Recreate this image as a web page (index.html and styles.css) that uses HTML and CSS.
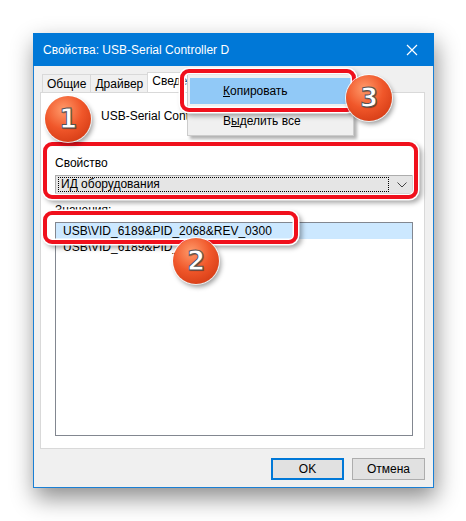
FILE: index.html
```html
<!DOCTYPE html>
<html>

<head lang="ru">
    <meta charset="UTF-8">
    <title>Свойства: USB-Serial Controller D</title>
    <link rel="stylesheet" href="styles.css">
</head>

<body>

    <div class="window">
        <div class="titlebar">
            <span class="title">Свойства: USB-Serial Controller D</span>
            <svg class="close" width="12" height="12" viewBox="0 0 12 12">
                <path d="M1 1 L11 11 M11 1 L1 11" stroke="#fff" stroke-width="1.2" fill="none" />
            </svg>
        </div>

        <div class="content">
            <div class="tabs">
                <span class="tab">Общие</span>
                <span class="tab">Драйвер</span>
                <span class="tab active">Сведения</span>
                <span class="tab">События</span>
            </div>

            <div class="panel">
                <div class="device">
                    <svg class="device-icon" width="32" height="32" viewBox="0 0 32 32">
                        <rect x="4" y="8" width="24" height="16" fill="#9aa4ad" />
                    </svg>
                    <span>USB-Serial Controller D</span>
                </div>

                <div class="label">Свойство</div>
                <div class="combo">
                    <span class="combo-value">ИД оборудования</span>
                    <svg class="combo-arrow" width="10" height="6" viewBox="0 0 10 6">
                        <path d="M0.5 0.5 L5 5 L9.5 0.5" stroke="#444" stroke-width="1" fill="none" />
                    </svg>
                </div>

                <div class="label values">Значения:</div>
                <div class="listbox">
                    <div class="row selected">USB\VID_6189&amp;PID_2068&amp;REV_0300</div>
                    <div class="row">USB\VID_6189&amp;PID_2068</div>
                </div>
            </div>

            <div class="footer">
                <button class="btn default">OK</button>
                <button class="btn">Отмена</button>
            </div>
        </div>

        <!-- контекстное меню поверх вкладок -->
        <div class="menu">
            <div class="menu-item hover"><u>К</u>опировать</div>
            <div class="menu-item">В<u>ы</u>делить все</div>
        </div>

        <!-- пометки -->
        <div class="mark mark-1"></div>
        <div class="mark mark-2"></div>
        <div class="mark mark-3"></div>

        <div class="num num-1">1</div>
        <div class="num num-2">2</div>
        <div class="num num-3">3</div>
    </div>

</body>

</html>
```

FILE: styles.css
```css
body {
    margin: 0;
    padding: 33px;
    background: #fff;
    font-family: "Liberation Sans", Arial, sans-serif;
    font-size: 12px;
    color: #000;
}

.window {
    position: relative;
    width: 401px;
    height: 455px;
    box-sizing: border-box;
    border: 1px solid #1a7fd4;
    background: #f0f0f0;
    box-shadow: 2px 10px 22px rgba(0, 0, 0, 0.45);
    display: flex;
    flex-direction: column;
}

.titlebar {
    height: 33px;
    margin: -1px -1px 0 -1px;
    background: #0078d7;
    color: #fff;
    display: flex;
    align-items: center;
    padding: 0 12px 0 10px;
    justify-content: space-between;
}

.title {
    font-size: 12px;
}

.close {
    margin-right: 4px;
}

.content {
    padding: 6px 8px 0 6px;
    display: flex;
    flex-direction: column;
}

.tabs {
    display: flex;
    align-items: flex-end;
    height: 20px;
    padding-left: 2px;
}

.tab {
    height: 17px;
    line-height: 18px;
    padding: 0 4px;
    border: 1px solid #d9d9d9;
    border-bottom: none;
    background: #f0f0f0;
    margin-right: -1px;
}

.tab.active {
    height: 20px;
    line-height: 17px;
    background: #fff;
    margin-bottom: -1px;
}

.panel {
    height: 357px;
    box-sizing: border-box;
    border: 1px solid #d9d9d9;
    background: #fff;
    padding: 0 11px 0 14px;
}

.device {
    display: flex;
    align-items: center;
    height: 44px;
    margin-top: 1px;
}

.device-icon {
    margin-right: 14px;
}

.label {
    margin-top: 17px;
    height: 16px;
    line-height: 16px;
}

.combo {
    margin-top: 4px;
    height: 19px;
    box-sizing: border-box;
    border: 1px solid #adadad;
    background: #e5e5e5;
    display: flex;
    align-items: center;
    padding: 0 5px 0 2px;
}

.combo-value {
    flex: 1;
    border: 1px dotted #000;
    height: 13px;
    line-height: 13px;
    padding-left: 2px;
    margin-right: 8px;
}

.label.values {
    margin-top: 8px;
}

.listbox {
    margin-top: 4px;
    height: 214px;
    box-sizing: border-box;
    border: 1px solid #828790;
    background: #fff;
}

.row {
    height: 16px;
    line-height: 16px;
    padding-left: 7px;
}

.row.selected {
    background: #cce8ff;
}

.footer {
    display: flex;
    justify-content: flex-end;
    gap: 8px;
    margin-top: 9px;
}

.btn {
    width: 73px;
    height: 22px;
    box-sizing: border-box;
    border: 1px solid #adadad;
    background: #e1e1e1;
    font-family: "Liberation Sans", Arial, sans-serif;
    font-size: 12px;
    padding: 0;
}

.btn.default {
    border: 2px solid #0078d7;
}

.menu {
    position: absolute;
    left: 153px;
    top: 40px;
    width: 167px;
    height: 62px;
    box-sizing: border-box;
    border: 1px solid #ccc;
    background: #f0f0f0;
    box-shadow: 3px 3px 3px rgba(0, 0, 0, 0.3);
    padding: 3px 2px 2px;
}

.menu-item {
    height: 23px;
    line-height: 23px;
    padding-left: 33px;
}

.menu-item.hover {
    height: 26px;
    line-height: 26px;
    background: #91c9f7;
    margin-bottom: 6px;
}

.mark {
    position: absolute;
    box-sizing: border-box;
    border: 4px solid #f0101c;
    border-radius: 9px;
    box-shadow: 0 0 0 1.5px #fff, inset 0 0 0 1.5px #fff, 3px 3px 5px 1px rgba(0, 0, 0, 0.35);
}

.mark-1 {
    left: 9px;
    top: 108px;
    width: 375px;
    height: 57px;
}

.mark-2 {
    left: 9px;
    top: 177px;
    width: 255px;
    height: 33px;
}

.mark-3 {
    left: 146px;
    top: 35px;
    width: 176px;
    height: 43px;
}

.num {
    position: absolute;
    width: 46px;
    height: 46px;
    border-radius: 50%;
    background: radial-gradient(circle at 40% 30%, #ff9a6a 0%, #f0572a 45%, #c9300c 100%);
    box-shadow: 0 0 0 1px rgba(255, 255, 255, 0.8), 2px 3px 5px rgba(0, 0, 0, 0.4);
    color: #fff;
    font-family: "DejaVu Sans", sans-serif;
    font-weight: bold;
    font-size: 26px;
    line-height: 46px;
    text-align: center;
    -webkit-text-stroke: 1px #555;
    text-shadow: 1px 1px 1px rgba(0, 0, 0, 0.4);
}

.num-1 {
    left: 11px;
    top: 62px;
}

.num-2 {
    left: 139px;
    top: 204px;
}

.num-3 {
    left: 312px;
    top: 41px;
}
```
